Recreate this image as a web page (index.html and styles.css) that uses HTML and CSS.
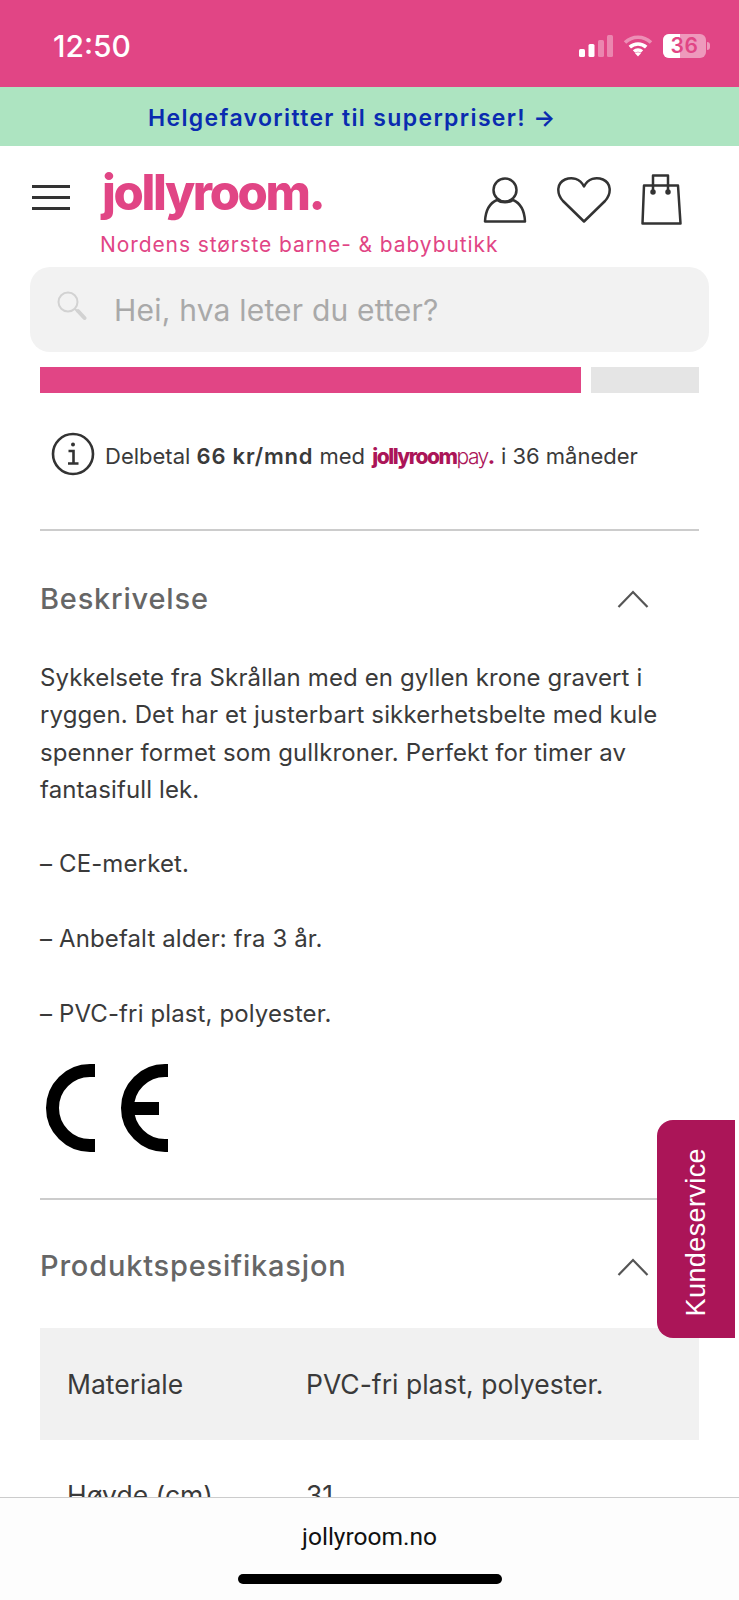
FILE: index.html
```html
<!DOCTYPE html>
<html lang="no">
<head>
  <meta charset="UTF-8">
  <title>Jollyroom</title>
  <link rel="stylesheet" href="styles.css">
</head>
<body>
  <!-- Statuslinje -->
  <div class="status-bar">
    <span class="time">12:50</span>
    <div class="status-icons">
      <svg class="signal" width="34" height="22" viewBox="0 0 34 22">
        <rect x="0" y="14" width="6" height="8" rx="1.5" fill="#fff"/>
        <rect x="9.500" y="9" width="6" height="13" rx="1.5" fill="#fff"/>
        <rect x="19" y="5" width="6" height="17" rx="1.5" fill="#fff" opacity=".35"/>
        <rect x="28" y="0" width="6" height="22" rx="1.5" fill="#fff" opacity=".35"/>
      </svg>
      <svg class="wifi" width="30" height="22" viewBox="0 0 30 22" fill="none" stroke="#fff" stroke-width="3.6">
        <path d="M2 7.5C9.5 .5 20.500 .5 28 7.500" opacity=".4"/>
        <path d="M6.800 12.200C11.500 8 18.500 8 23.200 12.200"/>
        <path d="M11 16.500C13.300 14.500 16.700 14.500 19 16.500"/>
        <path d="M15 21.500l-3-3.300c1.800-1.200 4.200-1.200 6 0z" fill="#fff" stroke="none"/>
      </svg>
      <div class="battery">
        <div class="battery-level"></div>
        <span class="battery-num">36</span>
      </div>
      <div class="battery-cap"></div>
    </div>
  </div>

  <a class="promo">Helgefavoritter til superpriser! →</a>

  <header class="site-header">
    <div class="burger"><span></span><span></span><span></span></div>
    <div class="brand">
      <div class="logo">jollyroom.</div>
      <div class="tagline">Nordens største barne- &amp; babybutikk</div>
    </div>
    <div class="header-icons">
      <svg width="44" height="46" viewBox="0 0 44 46" fill="none" stroke="#333" stroke-width="2.500" stroke-linejoin="round">
        <circle cx="22" cy="13" r="11.500"/>
        <path d="M14 23C7 26 2.500 33 2 44.500H42C41.500 33 37 26 30 23C26 26 18 26 14 23Z"/>
      </svg>
      <svg width="54" height="47" viewBox="0 0 54 47" fill="none" stroke="#333" stroke-width="2.500" stroke-linejoin="round">
        <path d="M27 45.500L6 25C-1 17 0 7 8 3.500C15 .5 23 2.500 27 10.500C31 2.500 39 .5 46 3.500C54 7 55 17 48 25Z"/>
      </svg>
      <svg width="41" height="51" viewBox="0 0 41 51" fill="none" stroke="#333" stroke-width="2.500" stroke-linejoin="round">
        <path d="M3 11.500H37L39.500 49.500H1.500Z"/>
        <path d="M12 18V1.500H27V18"/>
        <circle cx="12" cy="18" r="1.500" fill="#333"/>
        <circle cx="27" cy="18" r="1.500" fill="#333"/>
      </svg>
    </div>
  </header>

  <div class="search">
    <svg class="search-icon" width="30" height="30" viewBox="0 0 30 30" fill="none" stroke="#d2d2d2" stroke-width="2">
      <circle cx="11" cy="11" r="9.500"/>
      <path d="M18 18l2.500 2.500" />
      <path d="M21 20l6.500 7" stroke-width="4" stroke-linecap="round"/>
    </svg>
    <span class="search-text">Hei, hva leter du etter?</span>
  </div>

  <main class="content">
    <div class="stock-bar">
      <div class="stock-fill"></div>
      <div class="stock-rest"></div>
    </div>

    <div class="pay-info">
      <svg width="44" height="44" viewBox="0 0 44 44" fill="none" stroke="#333" stroke-width="2.600">
        <circle cx="22" cy="22" r="20"/>
        <circle cx="22" cy="12.500" r="2" fill="#333" stroke="none"/>
        <path d="M17.500 19H22.500V31M17 31.500H27.500"/>
      </svg>
      <p>Delbetal <b>66 kr/mnd</b> med <span class="pay-logo"><b>jollyroom</b>pay<b>.</b></span> i 36 måneder</p>
    </div>

    <section class="block">
      <div class="block-head">
        <h2>Beskrivelse</h2>
        <svg class="chevron" width="32" height="18" viewBox="0 0 32 18" fill="none" stroke="#555" stroke-width="2.200"><path d="M1.500 17L16 2L30.500 17"/></svg>
      </div>
      <div class="description">
        <p>Sykkelsete fra Skrållan med en gyllen krone gravert i ryggen. Det har et justerbart sikkerhetsbelte med kule spenner formet som gullkroner. Perfekt for timer av fantasifull lek.</p>
        <p>– CE-merket.</p>
        <p>– Anbefalt alder: fra 3 år.</p>
        <p>– PVC-fri plast, polyester.</p>
      </div>
      <svg class="ce-mark" width="128" height="88" viewBox="0 0 128 88" fill="none" stroke="#000" stroke-width="13">
        <path d="M55 6.500H50A37.500 37.500 0 0 0 50 81.500H55"/>
        <path d="M128 6.500H125A37.500 37.500 0 0 0 125 81.500H128"/>
        <path d="M90 44.500H119"/>
      </svg>
    </section>

    <section class="block block-spec">
      <div class="block-head">
        <h2>Produktspesifikasjon</h2>
        <svg class="chevron" width="32" height="18" viewBox="0 0 32 18" fill="none" stroke="#555" stroke-width="2.200"><path d="M1.500 17L16 2L30.500 17"/></svg>
      </div>
      <div class="spec-row odd"><span>Materiale</span><span>PVC-fri plast, polyester.</span></div>
      <div class="spec-row"><span>Høyde (cm)</span><span>31</span></div>
    </section>
  </main>

  <a class="support-tab"><span>Kundeservice</span></a>

  <!-- Adresselinje i Safari -->
  <div class="browser-bar">
    <div class="url">jollyroom.no</div>
    <div class="home-pill"></div>
  </div>
</body>
</html>
```

FILE: styles.css
```css
:root {
  --pink: #e14585;
  --berry: #ab1558;
  --text: #3a3a3a;
  --line: #cccccc;
}
* {
  box-sizing: border-box;
}
html, body {
  margin: 0;
  height: 1600px;
  overflow: hidden;
}
body {
  position: relative;
  font-family: "Inter", sans-serif;
  color: var(--text);
  background: #fff;
}
p, h2 {
  margin: 0;
}

.status-bar {
  height: 87px;
  background: var(--pink);
  color: #fff;
  display: flex;
  align-items: center;
  justify-content: space-between;
  padding: 0 29px 0 53px;
}
.time {
  font-size: 30px;
  font-weight: 500;
  margin-top: 5px;
}
.status-icons {
  display: flex;
  align-items: center;
  margin-top: 5px;
}
.signal {
  margin-right: 10px;
}
.wifi {
  margin-right: 10px;
}
.battery {
  position: relative;
  width: 43px;
  height: 24px;
  border-radius: 6px;
  background: rgba(255,255,255,0.45);
  overflow: hidden;
}
.battery-level {
  width: 17px;
  height: 100%;
  background: #fff;
}
.battery-num {
  position: absolute;
  inset: 0;
  text-align: center;
  font-weight: 600;
  font-size: 21px;
  line-height: 24px;
  letter-spacing: 0.500px;
  color: var(--pink);
}
.battery-cap {
  width: 3px;
  height: 8px;
  margin-left: 1px;
  border-radius: 0 3px 3px 0;
  background: rgba(255,255,255,0.45);
}

.promo {
  display: block;
  height: 59px;
  background: #ade4c1;
  color: #0a2bb0;
  font-size: 23px;
  font-weight: 600;
  line-height: 62px;
  letter-spacing: 1.350px;
  padding-left: 148px;
}

.site-header {
  height: 121px;
  display: flex;
  align-items: flex-start;
  padding: 26px 0 0 32px;
}
.burger {
  width: 38px;
  display: flex;
  flex-direction: column;
  gap: 8.500px;
  margin-top: 13px;
  margin-right: 30px;
}
.burger span {
  height: 2.500px;
  background: #333;
}
.brand {
  width: 381px;
}
.logo {
  font-weight: 800;
  font-size: 49px;
  line-height: 50px;
  letter-spacing: -2.400px;
  color: var(--pink);
  height: 50px;
  margin: -4px 0 0 2px;
}
.tagline {
  font-size: 21px;
  line-height: 26px;
  letter-spacing: 0.900px;
  color: var(--pink);
  margin-top: 14px;
  white-space: nowrap;
}
.header-icons {
  display: flex;
  align-items: center;
  gap: 30px;
  margin-left: 2px;
  margin-top: 2px;
}

.search {
  margin: 0 30px;
  height: 85px;
  border-radius: 20px;
  background: #f2f2f2;
  display: flex;
  align-items: center;
  padding-left: 27px;
}
.search-icon {
  margin-right: 27px;
  margin-top: -8px;
}
.search-text {
  font-size: 30px;
  letter-spacing: 0.200px;
  color: #a9a9a9;
}

.content {
  padding: 15px 40px 0;
}
.stock-bar {
  display: flex;
  gap: 10px;
  height: 26px;
}
.stock-fill {
  width: 541px;
  background: var(--pink);
}
.stock-rest {
  flex: 1;
  background: #e5e5e5;
}

.pay-info {
  display: flex;
  gap: 10px;
  padding: 39px 0 0 11px;
  height: 138px;
  align-items: flex-start;
  font-size: 22px;
  border-bottom: 2px solid var(--line);
}
.pay-info p {
  line-height: 44px;
  margin-top: 2px;
}
.pay-info b {
  font-weight: 600;
  letter-spacing: 0.800px;
}
.pay-logo {
  color: var(--berry);
  font-size: 21px;
  font-weight: 300;
  letter-spacing: -1.500px;
  margin: 0 1px;
}
.pay-logo b {
  font-weight: 800;
  letter-spacing: -1.500px;
}

.block-head {
  display: flex;
  align-items: center;
  justify-content: space-between;
  height: 134px;
  padding-right: 50px;
}
.block-head h2 {
  font-size: 29px;
  font-weight: 500;
  letter-spacing: 0.800px;
  color: #666;
}
.chevron {
  margin-top: 2px;
}
.description {
  font-size: 24px;
  line-height: 37.300px;
  letter-spacing: 0.120px;
  margin-top: -6px;
}
.description p {
  margin-bottom: 37.300px;
}
.ce-mark {
  display: block;
  margin-top: -5px;
}
.block-spec {
  margin-top: 46px;
  border-top: 2px solid var(--line);
}
.block-spec .block-head {
  height: 128px;
  padding-top: 3px;
}
.spec-row {
  height: 110px;
  display: grid;
  grid-template-columns: 239px 1fr;
  align-items: center;
  padding-left: 27px;
  font-size: 26.500px;
}
.spec-row.odd {
  height: 112px;
  background: #f1f1f1;
}

.support-tab {
  position: absolute;
  top: 1120px;
  left: 657px;
  width: 78px;
  height: 218px;
  padding-top: 7px;
  border-radius: 16px 0 0 16px;
  background: var(--berry);
  color: #fff;
  display: flex;
  align-items: center;
  justify-content: center;
  font-family: "Liberation Sans", sans-serif;
  font-size: 27px;
  letter-spacing: 0.400px;
}
.support-tab span {
  writing-mode: vertical-rl;
  transform: rotate(180deg);
}

.browser-bar {
  position: absolute;
  left: 0;
  right: 0;
  top: 1497px;
  height: 103px;
  background: #fdfdfd;
  border-top: 1px solid var(--line);
  display: flex;
  flex-direction: column;
  align-items: center;
}
.url {
  font-family: "Roboto", sans-serif;
  font-size: 24.500px;
  line-height: 28px;
  color: #111;
  margin-top: 25px;
}
.home-pill {
  width: 264px;
  height: 10px;
  border-radius: 5px;
  background: #000;
  margin-top: 23px;
}
```
